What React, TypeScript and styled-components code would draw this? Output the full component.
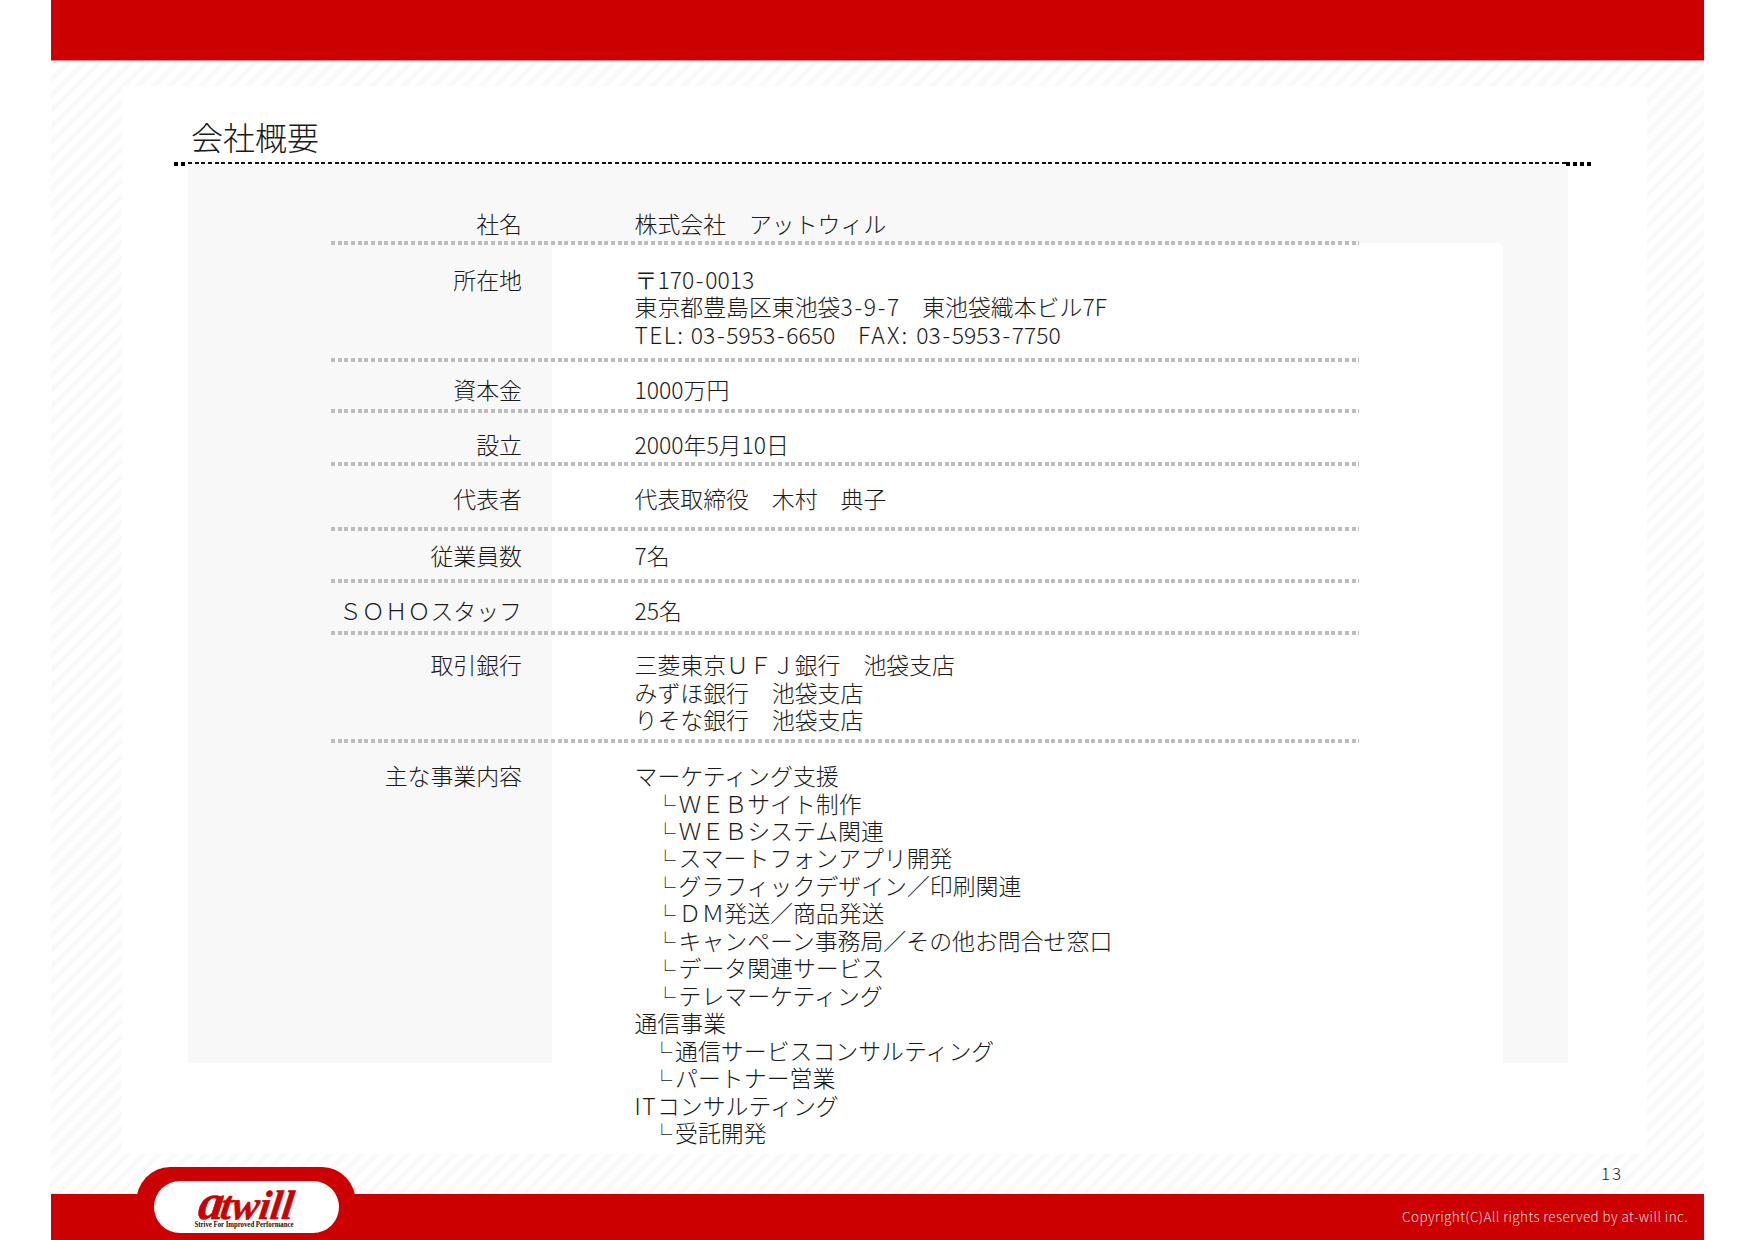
import React from "react";
import styled, { createGlobalStyle } from "styled-components";

const Global = createGlobalStyle`
  html, body { margin: 0; padding: 0; background: #fff; }
  body { font-family: "Noto Sans CJK JP", "Noto Sans", sans-serif; color: #1a1a1a; }
`;

const Slide = styled.div`
  position: relative;
  width: 1653px;
  height: 1240px;
  margin-left: 51px;
  display: flex;
  flex-direction: column;
  overflow: hidden;
`;

const TopBar = styled.div`
  height: 59.5px;
  flex: none;
  background: #cc0000;
  border-bottom: 1px solid #e98a8a;
`;

const Stage = styled.div`
  flex: 1;
  padding: 25.5px 57px 40px 71px;
  background: repeating-linear-gradient(135deg, #f9f9f9 0 5px, #ffffff 5px 11px);
`;

const Sheet = styled.div`
  height: 1067.5px;
  background: #fff;
  padding-top: 30px;
  box-sizing: border-box;
`;

const Title = styled.h1`
  margin: 0 0 6px 69px;
  font-size: 32px;
  line-height: 40px;
  font-weight: 300;
  color: #1a1a1a;
`;

const Rule = styled.div`
  display: flex;
  margin-left: 52px;
  width: 1417px;
  height: 4px;
`;

const RuleEnd = styled.div<{ $w: number }>`
  flex: none;
  width: ${(p) => p.$w}px;
  height: 4px;
  background: repeating-linear-gradient(90deg, #000 0 4px, transparent 4px 7px);
`;

const RuleMid = styled.div`
  flex: 1;
  height: 2px;
  margin-left: 3px;
  background: repeating-linear-gradient(90deg, #111 0 4px, transparent 4px 6.67px);
`;

const Stack = styled.div`
  display: grid;
  margin-left: 66px;
  width: 1380px;
`;

const Backdrop = styled.div`
  grid-area: 1 / 1;
  height: 897px;
  box-sizing: border-box;
  display: flex;
  padding: 77px 65px 0 364px;
  background: #f8f8f8;
`;

const Inset = styled.div`
  flex: 1;
  background: #fff;
  border-top-right-radius: 5px;
`;

const Table = styled.dl`
  grid-area: 1 / 1;
  margin: 0 0 0 143px;
  width: 1028px;
  font-size: 22.9px;
  line-height: 27.45px;
  font-weight: 300;
  color: #1a1a1a;
`;

const Row = styled.div<{ $top: number; $bottom: number; $last?: boolean }>`
  display: grid;
  grid-template-columns: 191px 1fr;
  column-gap: 112.5px;
  padding: ${(p) => p.$top}px 0 ${(p) => p.$bottom}px;
  ${(p) =>
    !p.$last &&
    `background: repeating-linear-gradient(90deg, #bdbdbd 0 4px, transparent 4px 6.67px) bottom / 100% 4px no-repeat;
     padding-bottom: ${p.$bottom + 4}px;`}
`;

const Label = styled.dt`
  text-align: right;
  white-space: nowrap;
`;

const Value = styled.dd`
  margin: 0;
`;

const Line = styled.div<{ $indent?: number }>`
  white-space: pre;
  padding-left: ${(p) => p.$indent ?? 0}px;
`;

const Corner = styled.span`
  display: inline-block;
  width: 15px;
  font-size: 15px;
  line-height: 0;
  vertical-align: 6.5px;
  margin-left: -1px;
  margin-right: 1px;
`;

const Spaced = styled.span<{ $s: number }>`
  letter-spacing: ${(p) => p.$s}px;
`;

const Hyphen = styled.span`
  padding: 0 1.7px;
`;

const Tab = styled.div`
  position: absolute;
  left: 85px;
  top: 1167px;
  width: 220px;
  height: 73px;
  background: #cc0000;
  border-radius: 34px 34px 0 0 / 36px 36px 0 0;
  display: flex;
  justify-content: center;
  padding-top: 14px;
  box-sizing: border-box;
`;

const Pill = styled.div`
  width: 185px;
  height: 52px;
  background: #fff;
  border-radius: 26px;
  display: flex;
  justify-content: center;
  padding-top: 5px;
  box-sizing: border-box;
`;

const LogoMark = styled.svg`
  overflow: visible;
`;

const PageNo = styled.div`
  position: absolute;
  left: 1550px;
  top: 1161px;
  font-size: 17px;
  line-height: 24px;
  letter-spacing: 2px;
  font-weight: 300;
  color: #1a1a1a;
`;

const Footer = styled.div`
  height: 46.5px;
  flex: none;
  background: #cc0000;
  display: flex;
  justify-content: flex-end;
  align-items: center;
  padding: 0 16px 2px 0;
  box-sizing: border-box;
`;

const Copyright = styled.div`
  font-size: 13.5px;
  letter-spacing: 0.4px;
  font-weight: 300;
  color: #f6dede;
`;

const Logo = () => (
  <LogoMark width="100" height="42" viewBox="0 0 100 42" role="img" aria-label="Atwill">
    <text
      transform="translate(0 33) skewX(-8)"
      fill="#cc0000"
      stroke="#cc0000"
      strokeWidth="0.5"
      fontFamily="'Liberation Serif', serif"
      fontWeight="700"
      fontStyle="italic"
    >
      <tspan x="1" fontSize="50">a</tspan>
      <tspan dx="-3" fontSize="41">twill</tspan>
    </text>
    <text
      x="-1.5"
      y="40.5"
      fontFamily="'Liberation Serif', serif"
      fontWeight="700"
      fontSize="7.5"
      fill="#111"
      textLength="99"
      lengthAdjust="spacingAndGlyphs"
    >
      Strive For Improved Performance
    </text>
  </LogoMark>
);

const Text = ({ value }: { value: string }) => (
  <>
    {value.split(/(TEL: |FAX: |IT|-)/).map((part, i) => {
      if (part === "-") return <Hyphen key={i}>-</Hyphen>;
      if (part === "FAX: ") return <Spaced key={i} $s={2}>{part}</Spaced>;
      if (part === "TEL: " || part === "IT") return <Spaced key={i} $s={1.4}>{part}</Spaced>;
      return part;
    })}
  </>
);

type LineData = { t: string; i?: number; sub?: boolean };
type RowData = { label: string; lines: LineData[]; top: number; bottom: number };

const L = (...ts: string[]): LineData[] => ts.map((t) => ({ t }));
const sub1 = (t: string): LineData => ({ t, i: 29, sub: true });
const sub2 = (t: string): LineData => ({ t, i: 25.6, sub: true });

const rows: RowData[] = [
  { label: "社名", lines: L("株式会社　アットウィル"), top: 44.3, bottom: 3.3 },
  {
    label: "所在地",
    lines: L("〒170-0013", "東京都豊島区東池袋3-9-7　東池袋織本ビル7F", "TEL: 03-5953-6650　FAX: 03-5953-7750"),
    top: 20.8,
    bottom: 9.5,
  },
  { label: "資本金", lines: L("1000万円"), top: 14.3, bottom: 5.8 },
  { label: "設立", lines: L("2000年5月10日"), top: 17.8, bottom: 3.3 },
  { label: "代表者", lines: L("代表取締役　木村　典子"), top: 19.3, bottom: 14.3 },
  { label: "従業員数", lines: L("7名"), top: 10.8, bottom: 10.3 },
  { label: "ＳＯＨＯスタッフ", lines: L("25名"), top: 13.3, bottom: 6.8 },
  { label: "取引銀行", lines: L("三菱東京ＵＦＪ銀行　池袋支店", "みずほ銀行　池袋支店", "りそな銀行　池袋支店"), top: 16.3, bottom: 5 },
  {
    label: "主な事業内容",
    lines: [
      { t: "マーケティング支援" },
      sub1("ＷＥＢサイト制作"),
      sub1("ＷＥＢシステム関連"),
      sub1("スマートフォンアプリ開発"),
      sub1("グラフィックデザイン／印刷関連"),
      sub1("ＤＭ発送／商品発送"),
      sub1("キャンペーン事務局／その他お問合せ窓口"),
      sub1("データ関連サービス"),
      sub1("テレマーケティング"),
      { t: "通信事業" },
      sub2("通信サービスコンサルティング"),
      sub2("パートナー営業"),
      { t: "ITコンサルティング" },
      sub2("受託開発"),
    ],
    top: 19.5,
    bottom: 0,
  },
];

export default function App() {
  return (
    <>
      <Global />
      <Slide>
        <TopBar />
        <Stage>
          <Sheet>
            <Title>会社概要</Title>
            <Rule>
              <RuleEnd $w={11} />
              <RuleMid />
              <RuleEnd $w={25} />
            </Rule>
            <Stack>
              <Backdrop>
                <Inset />
              </Backdrop>
              <Table>
                {rows.map((r, i) => (
                  <Row key={r.label} $top={r.top} $bottom={r.bottom} $last={i === rows.length - 1}>
                    <Label>{r.label}</Label>
                    <Value>
                      {r.lines.map((l, j) => (
                        <Line key={j} $indent={l.i}>
                          {l.sub && <Corner>∟</Corner>}
                          <Text value={l.t} />
                        </Line>
                      ))}
                    </Value>
                  </Row>
                ))}
              </Table>
            </Stack>
          </Sheet>
        </Stage>
        <Footer>
          <Copyright>Copyright(C)All rights reserved by at-will inc.</Copyright>
        </Footer>
        <Tab>
          <Pill>
            <Logo />
          </Pill>
        </Tab>
        <PageNo>13</PageNo>
      </Slide>
    </>
  );
}
